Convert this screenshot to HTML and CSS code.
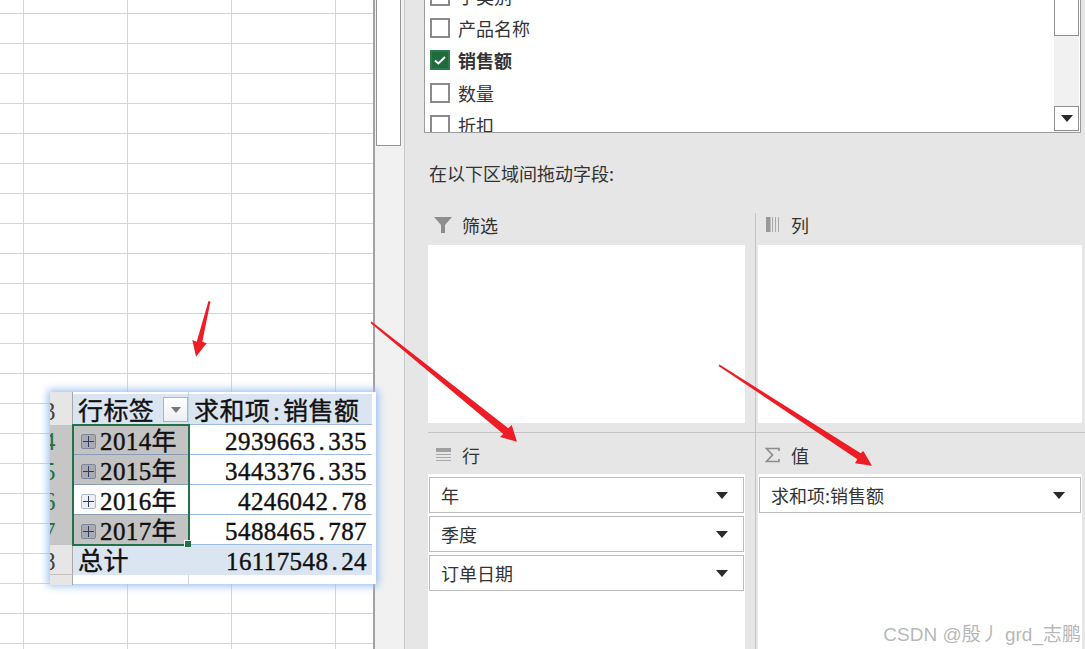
FILE: index.html
```html
<!DOCTYPE html>
<html lang="zh">
<head>
<meta charset="utf-8">
<title>数据透视表字段</title>
<link rel="stylesheet" href="styles.css">
</head>
<body>
<div class="app">
  <main class="sheet">
    <div class="pivot">
      <div class="pv-row pv-edge"><div class="rh"></div><div class="ca"></div><div class="cb"></div></div>
      <div class="pv-row pv-head"><div class="rh">3</div><div class="ca">行标签<span class="filter"><i></i></span></div><div class="cb lead">求和项<span class="half">:</span>销售额</div></div>
      <div class="pv-row sel"><div class="rh">4</div><div class="ca"><span class="plus"></span>2014年</div><div class="cb">2939663<span class="half">.</span>335</div></div>
      <div class="pv-row sel"><div class="rh">5</div><div class="ca"><span class="plus"></span>2015年</div><div class="cb">3443376<span class="half">.</span>335</div></div>
      <div class="pv-row sel plain"><div class="rh">6</div><div class="ca"><span class="plus"></span>2016年</div><div class="cb">4246042<span class="half">.</span>78</div></div>
      <div class="pv-row sel"><div class="rh">7</div><div class="ca"><span class="plus"></span>2017年</div><div class="cb">5488465<span class="half">.</span>787</div></div>
      <div class="pv-row pv-total"><div class="rh">8</div><div class="ca">总计</div><div class="cb">16117548<span class="half">.</span>24</div></div>
      <div class="pv-row pv-tail"><div class="rh"></div><div class="ca"></div><div class="cb"></div></div>
      <div class="selection"><span class="handle"></span></div>
    </div>
  </main>
  <div class="vscroll"><div class="thumb"></div></div>
  <aside class="panel">
    <div class="fields">
      <ul class="field-list">
        <li class="field"><span class="check"></span>子类别</li>
        <li class="field"><span class="check"></span>产品名称</li>
        <li class="field on"><span class="check"><svg viewBox="0 0 20 20" width="20" height="20"><path d="M5 10.500l3.400 3L15 7" fill="none" stroke="#fff" stroke-width="2"/></svg></span>销售额</li>
        <li class="field"><span class="check"></span>数量</li>
        <li class="field"><span class="check"></span>折扣</li>
      </ul>
      <div class="list-scroll">
        <div class="list-thumb"></div>
        <div class="list-track"></div>
        <div class="list-btn"><span class="caret"></span></div>
      </div>
    </div>
    <p class="hint">在以下区域间拖动字段:</p>
    <div class="areas">
      <section class="area a-top a-left">
        <header class="area-head">
          <svg class="ico" viewBox="0 0 20 20" width="20" height="20"><path d="M1 2h18l-7 8v8H8v-8z" fill="#8e8e8e"/></svg>筛选
        </header>
        <div class="area-box"></div>
      </section>
      <section class="area a-top a-right">
        <header class="area-head">
          <svg class="ico" viewBox="0 0 20 20" width="20" height="20"><path d="M4 2h4.500v15H4z" fill="#999"/><path d="M10.500 2v15M13.500 2v15M16.500 2v15" stroke="#aaa" fill="none"/></svg>列
        </header>
        <div class="area-box"></div>
      </section>
      <section class="area a-bot a-left">
        <header class="area-head">
          <svg class="ico" viewBox="0 0 20 20" width="20" height="20"><path d="M3 3h15v4H3z" fill="#a0a0a0"/><path d="M3 9.500h15M3 12.500h15M3 15.500h15" stroke="#a8a8a8" fill="none"/></svg>行
        </header>
        <div class="area-box">
          <div class="chip">年<span class="caret"></span></div>
          <div class="chip">季度<span class="caret"></span></div>
          <div class="chip">订单日期<span class="caret"></span></div>
        </div>
      </section>
      <section class="area a-bot a-right">
        <header class="area-head">
          <svg class="ico" viewBox="0 0 20 20" width="20" height="20"><path d="M17 6V3.500H4.500l6 6.500-6 6.500H17V14" fill="none" stroke="#8e8e8e" stroke-width="1.700"/></svg>值
        </header>
        <div class="area-box">
          <div class="chip">求和项:销售额<span class="caret"></span></div>
        </div>
      </section>
    </div>
  </aside>
  <svg class="arrows" viewBox="0 0 1085 649" width="1085" height="649">
    <polygon points="208.500,301 210.500,301.500 202.300,341.700 206.700,343.300 196,356.700 192.300,340 196.700,341.700"/>
    <polygon points="371.500,321.500 370.500,323 503.300,434 500,437 517,441.700 511.700,425 508.300,428.300"/>
    <polygon points="719.500,364.500 718.500,366 857.300,459.300 855,463.300 872,465.700 863.300,451 860.700,453.300"/>
  </svg>
  <div class="watermark">CSDN @殷丿 grd_志鹏</div>
</div>
</body>
</html>
```
FILE: styles.css
```css
* { box-sizing: border-box; }
html, body { margin: 0; padding: 0; background: #fff; }
.app {
  position: relative;
  display: flex;
  width: 1085px;
  height: 649px;
  overflow: hidden;
  font-family: "Noto Sans CJK SC", "Noto Sans", sans-serif;
  font-size: 18px;
  color: #333;
}

/* worksheet */
.sheet {
  position: relative;
  flex: none;
  width: 375px;
  height: 649px;
  border-right: 2px solid #a2a2a2;
  background-color: #fff;
  background-image:
    linear-gradient(to right, #d4d4d4 1px, transparent 1px),
    linear-gradient(to bottom, #d4d4d4 1px, transparent 1px);
  background-size: 104px 30px;
  background-position: 23px 13px;
}
.pivot {
  position: absolute;
  left: 50px;
  top: 392px;
  width: 326px;
  height: 192px;
  background: #fff;
  box-shadow: 0 0 8px 2px #98bdf0;
  font-family: "Liberation Serif", "Noto Sans CJK SC", serif;
  font-size: 25px;
  letter-spacing: 0.4px;
  color: #111;
  -webkit-text-stroke: 0.4px #111;
  z-index: 1;
}
.pv-row { display: flex; height: 30px; line-height: 33px; }
.rh {
  flex: none;
  width: 23px;
  overflow: hidden;
  text-indent: -7px;
  background: #e6e6e6;
  border-right: 1px solid #a8a8a8;
  border-bottom: 1px solid #c4c4c4;
  color: #444;
  -webkit-text-stroke: 0;
}
.ca {
  position: relative;
  flex: none;
  width: 116px;
  padding-left: 5px;
  white-space: nowrap;
  border-right: 1px solid transparent;
  border-bottom: 1px solid #9dbbe0;
}
.cb {
  flex: none;
  width: 183px;
  padding-right: 5px;
  text-align: right;
  white-space: nowrap;
  border-bottom: 1px solid #9dbbe0;
}
.cb.lead { text-align: left; padding: 0 0 0 5px; }
.half { display: inline-block; width: 12.900px; text-align: center; }
.pv-edge { height: 2px; }
.pv-edge .rh, .pv-tail .rh { border-bottom: 0; }
.pv-edge .ca, .pv-tail .ca { border-right: 1px solid #d4d4d4; border-bottom: 0; }
.pv-edge .cb, .pv-tail .cb { border-bottom: 0; }
.pv-tail { height: 10px; }
.pv-head { height: 31px; line-height: 35px; }
.pv-head .ca, .pv-head .cb { background: #dbe5f1; }
.pv-head .ca { border-right: 1px solid #bcd0e8; }
.pv-head .rh { border-bottom: 0; }
.pv-total .ca, .pv-total .cb { background: #dbe5f1; border-bottom: 0; }
.pv-total .rh { border-bottom: 1px solid #c4c4c4; }
.sel .rh { background: #c6c6c6; color: #217346; }
.sel .ca { background: #c3c3c3; padding-left: 27px; border-bottom-color: #8a9db8; }
.sel.plain .ca { background: #fff; }
.filter {
  position: absolute;
  left: 90px;
  top: 3px;
  width: 25px;
  height: 25px;
  display: flex;
  align-items: center;
  justify-content: center;
  border: 1px solid #b4b4b4;
  background: linear-gradient(#fff, #eceff4);
}
.filter i {
  width: 0;
  height: 0;
  border: 5px solid transparent;
  border-top: 6px solid #777;
  border-bottom: 0;
}
.plus {
  position: absolute;
  left: 8px;
  top: 9px;
  width: 15px;
  height: 15px;
  border: 1px solid #7f8796;
  border-radius: 2px;
  background:
    linear-gradient(#2c3a66, #2c3a66) center / 11px 1px no-repeat,
    linear-gradient(#2c3a66, #2c3a66) center / 1px 11px no-repeat,
    #a9abb1;
}
.plain .plus {
  border-color: #b0b8cc;
  background:
    linear-gradient(#2c3a66, #2c3a66) center / 11px 1px no-repeat,
    linear-gradient(#2c3a66, #2c3a66) center / 1px 11px no-repeat,
    #eef0f6;
}
.selection {
  position: absolute;
  left: 22px;
  top: 31.500px;
  width: 118px;
  height: 122px;
  border: 2px solid #217346;
}
.handle {
  position: absolute;
  right: -3px;
  bottom: -3px;
  width: 7px;
  height: 7px;
  background: #217346;
  border: 1px solid #fff;
  border-width: 1px 0 0 1px;
}

/* sheet scrollbar */
.vscroll {
  flex: none;
  width: 30px;
  height: 649px;
  background: #f1f1f1;
  border-right: 1px solid #c8c8c8;
}
.thumb {
  width: 25px;
  height: 146px;
  margin-left: 1px;
  background: #fff;
  border: 0 solid #959595;
  border-width: 0 1.500px 1.500px;
}

/* field panel */
.panel {
  flex: 1;
  height: 649px;
  background: #e6e6e6;
  display: flex;
  flex-direction: column;
}
.fields {
  display: flex;
  flex: none;
  width: 657px;
  height: 133px;
  margin-left: 19px;
  background: #fff;
  border: 1px solid #9c9c9c;
  border-top: 0;
  overflow: hidden;
}
.field-list {
  flex: 1;
  margin: -20.500px 0 0;
  padding: 0;
  list-style: none;
}
.field {
  display: flex;
  align-items: center;
  height: 32.400px;
  padding-left: 5px;
  white-space: nowrap;
}
.check {
  flex: none;
  width: 20px;
  height: 20px;
  margin-right: 8px;
  background: #fff;
  border: 2px solid #8a8a8a;
}
.check svg { display: block; margin: -2px; }
.on { font-weight: 700; }
.on .check { background: #1f6b3e; border-color: #2b7a4b; }
.list-scroll {
  flex: none;
  width: 25px;
  margin-right: 1px;
  display: flex;
  flex-direction: column;
  background: #f1f1f1;
}
.list-thumb {
  flex: none;
  height: 36px;
  background: #fff;
  border: 1px solid #8f8f8f;
  border-top: 0;
}
.list-track { flex: 1; }
.list-btn {
  flex: none;
  height: 25px;
  margin-bottom: 1px;
  display: flex;
  align-items: center;
  justify-content: center;
  background: #fff;
  border: 1px solid #8f8f8f;
}
.caret {
  display: block;
  width: 0;
  height: 0;
  border: 6px solid transparent;
  border-top: 7px solid #2b2b2b;
  border-bottom: 0;
}
.hint {
  margin: 27px 0 0 24px;
  height: 26px;
  line-height: 26px;
}
.areas {
  flex: 1;
  margin: 27px 0 0 23px;
  display: grid;
  grid-template-columns: 328px 329px;
  grid-template-rows: 220px 1fr;
  min-height: 0;
}
.area { display: flex; flex-direction: column; min-height: 0; }
.a-left { padding-right: 10px; border-right: 1px solid #c4c4c4; }
.a-right { padding-left: 2px; padding-right: 3px; }
.a-top { padding-bottom: 9px; border-bottom: 1px solid #c4c4c4; }
.area-head {
  flex: none;
  display: flex;
  align-items: center;
  height: 32px;
  padding: 0 0 8px 5px;
}
.a-bot .area-head { height: 41px; padding: 2px 0 0 5px; }
.a-right .area-head { padding-left: 4px; }
.ico { flex: none; margin-right: 9px; }
.area-box {
  flex: 1;
  background: #fff;
  padding: 3px 1px;
  display: flex;
  flex-direction: column;
  gap: 3px;
}
.chip {
  flex: none;
  display: flex;
  align-items: center;
  justify-content: space-between;
  height: 36px;
  padding: 0 15px 0 11px;
  background: #fff;
  border: 1px solid #bcbcbc;
}

/* annotations */
.arrows {
  position: absolute;
  left: 0;
  top: 0;
  z-index: 2;
  pointer-events: none;
}
.arrows polygon { fill: #ee1c25; }
.watermark {
  position: absolute;
  right: 4px;
  bottom: 3px;
  z-index: 3;
  font-family: "Liberation Sans", "Noto Sans CJK SC", sans-serif;
  font-size: 19px;
  color: rgba(120, 120, 120, 0.55);
  white-space: nowrap;
}
```
